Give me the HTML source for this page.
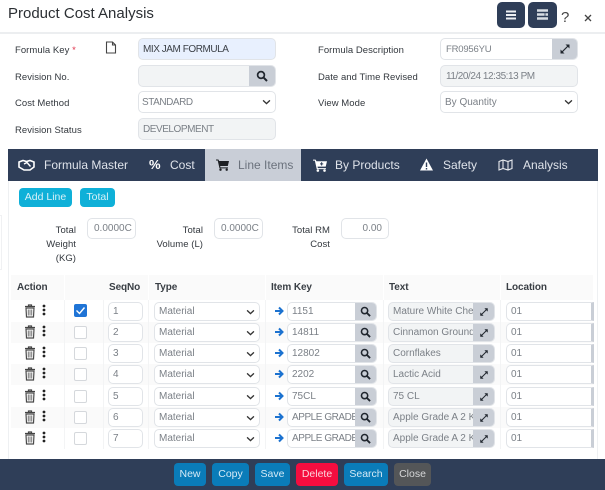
<!DOCTYPE html>
<html><head><meta charset="utf-8">
<style>
*{box-sizing:border-box}
html,body{margin:0;padding:0;background:#fff}
body{width:605px;height:490px;position:relative;overflow:hidden;font-family:"Liberation Sans",sans-serif;color:#333}
.a{position:absolute;white-space:nowrap}
.l{position:absolute;margin-top:1px;font-size:9.5px;letter-spacing:.05px;color:#33383e;line-height:12px;white-space:nowrap}
.f{position:absolute;border:1px solid #e1e4e8;border-radius:5px;background:#fff;font-size:10px;color:#7b8087;padding-left:4px;padding-top:1px;white-space:nowrap;overflow:hidden}
.u{letter-spacing:-.45px}
.g{background:#f2f4f5}
.b{position:absolute;right:0;top:0;bottom:0;background:#c9ced6;display:flex;align-items:center;justify-content:center}
.tab{position:absolute;top:149px;height:32px;line-height:32px;font-size:12px;color:#dfe3ea}
.btn{position:absolute;top:463px;height:23px;line-height:23px;text-align:center;font-size:10.5px;color:#d5eaf6;border-radius:4px;background:#0a7cb9}
.th{position:absolute;top:275px;height:25px;line-height:25px;font-size:10px;font-weight:bold;letter-spacing:-.1px;color:#3a3f45;background:#fafafa;padding-left:6px}
.cb{position:absolute;left:74px;width:13px;height:13px;border:1px solid #d5d8dc;border-radius:2px;background:#fff}
.loc{border-right:3px solid #c9ced6;border-radius:5px 0 0 5px}
.v{position:absolute;top:300px;width:1px;height:149px;background:#f3f4f5}
svg{display:block}
.ic{position:absolute}
</style></head><body>
<svg width="0" height="0" style="position:absolute"><defs>
<symbol id="s" viewBox="0 0 12 12"><circle cx="5" cy="5" r="3.4" fill="none" stroke="#20262e" stroke-width="1.7"/><path d="M7.6 7.6L11 11" stroke="#20262e" stroke-width="2"/></symbol>
<symbol id="e" viewBox="0 0 12 12"><path d="M3 9L9 3" stroke="#20262e" stroke-width="1.2"/><path d="M6.5 1.5H10.5V5.5ZM1.5 6.5V10.5H5.5Z" fill="#20262e"/></symbol>
<symbol id="c" viewBox="0 0 10 6"><path d="M1.2 1.2L5 4.8L8.8 1.2" fill="none" stroke="#333" stroke-width="1.5"/></symbol>
<symbol id="t" viewBox="0 0 12 14"><path d="M4.5 2V1H7.5V2M1 2.5H11" fill="none" stroke="#444" stroke-width="1.2"/><path d="M2 4H10L9.5 13H2.5Z" fill="none" stroke="#4a4a4a" stroke-width="1.2"/><path d="M4.3 5.5V11.5M6 5.5V11.5M7.7 5.5V11.5" stroke="#777"/></symbol>
<symbol id="k" viewBox="0 0 4 12"><circle cx="2" cy="2" r="1.4" fill="#222"/><circle cx="2" cy="6" r="1.4" fill="#222"/><circle cx="2" cy="10" r="1.4" fill="#222"/></symbol>
<symbol id="r" viewBox="0 0 10 10"><path d="M1 5H8M5 1.5L8.5 5L5 8.5" fill="none" stroke="#1b72d0" stroke-width="2"/></symbol>
</defs></svg>

<!-- header -->
<div class="a" style="left:0;top:32px;width:605px;height:2px;background:#eceef0"></div>
<div class="a" style="left:8px;top:4px;font-size:15px;line-height:20px;color:#2b2f33">Product Cost Analysis</div>
<div class="a" style="left:497px;top:2px;width:28px;height:26px;background:#2f3e58;border-radius:5px"></div>
<svg class="ic" style="left:505px;top:10px" width="12" height="10"><path d="M1 1.5H11M1 5H11M1 8.5H11" stroke="#eef0f3" stroke-width="2"/></svg>
<div class="a" style="left:528px;top:2px;width:29px;height:26px;background:#2f3e58;border-radius:5px"></div>
<svg class="ic" style="left:536px;top:9px" width="13" height="11"><path d="M1 1.5H12M1 5.5H12M1 9.5H12" stroke="#d9dde3" stroke-width="2.5"/><path d="M9 3L9 8" stroke="#2f3e58" stroke-width=".8"/></svg>
<div class="a" style="left:561px;top:9px;font-size:15px;line-height:17px;color:#444">?</div>
<svg class="ic" style="left:584px;top:14px" width="8" height="8"><path d="M1 1L7 7M7 1L1 7" stroke="#444" stroke-width="1.3"/></svg>

<!-- form -->
<div class="l" style="left:15px;top:44px">Formula Key <span style="color:#e0334c">*</span></div>
<svg class="ic" style="left:105px;top:41px" width="12" height="13"><path d="M1.5 1H7.5L10.5 4V12H1.5ZM7.5 1V4H10.5" fill="none" stroke="#444" stroke-width="1.1"/></svg>
<div class="f u" style="left:138px;top:38px;width:138px;height:22px;line-height:19px;background:#e8f0fe;color:#3c4148">MIX JAM FORMULA</div>
<div class="l" style="left:15px;top:71px">Revision No.</div>
<div class="f g" style="left:138px;top:65px;width:138px;height:22px"><div class="b" style="width:26px"><svg width="12" height="12"><use href="#s"/></svg></div></div>
<div class="l" style="left:15px;top:97px">Cost Method</div>
<div class="f u" style="left:138px;top:91px;width:138px;height:22px;line-height:19px;padding-left:3px">STANDARD<svg class="ic" style="right:4px;top:7px" width="9" height="6"><use href="#c"/></svg></div>
<div class="l" style="left:15px;top:124px">Revision Status</div>
<div class="f g u" style="left:138px;top:118px;width:138px;height:22px;line-height:19px">DEVELOPMENT</div>

<div class="l" style="left:318px;top:44px">Formula Description</div>
<div class="f" style="left:440px;top:38px;width:138px;height:22px;line-height:19px;padding-left:5px;font-size:9.5px;letter-spacing:-.2px">FR0956YU<div class="b" style="width:25px"><svg width="12" height="12"><use href="#e"/></svg></div></div>
<div class="l" style="left:318px;top:71px">Date and Time Revised</div>
<div class="f g" style="left:440px;top:65px;width:138px;height:22px;line-height:19px;letter-spacing:-.45px;padding-left:5px">11/20/24 12:35:13 PM</div>
<div class="l" style="left:318px;top:97px">View Mode</div>
<div class="f" style="left:440px;top:91px;width:138px;height:22px;line-height:19px;padding-left:4px">By Quantity<svg class="ic" style="right:4px;top:7px" width="9" height="6"><use href="#c"/></svg></div>

<!-- tabs -->
<div class="a" style="left:8px;top:149px;width:590px;height:32px;background:#2f3e58"></div>
<div class="a" style="left:205px;top:149px;width:96px;height:32px;background:#c9ced7"></div>
<svg class="ic" style="left:18px;top:159px" width="17" height="12" viewBox="0 0 17 12"><path d="M1 3L5 1.5L8.5 2.5L12 1.5L16 3V8L12 11H6L1 8Z" fill="none" stroke="#fff" stroke-width="1.6"/><path d="M6 5L9 3.5L12.5 7.5" fill="none" stroke="#fff" stroke-width="1.4"/></svg>
<div class="tab" style="left:44px">Formula Master</div>
<div class="a" style="left:149px;top:156px;font-size:13px;line-height:18px;font-weight:bold;color:#fff">%</div>
<div class="tab" style="left:170px">Cost</div>
<svg class="ic" style="left:216px;top:159px" width="13" height="12" viewBox="0 0 13 12"><path d="M0 .5H2.4L3.2 2H13L11.8 7H4.2L4.5 8.4H12V9.4H3.5L1.7 1.5H0Z" fill="#1d2024"/><circle cx="4.5" cy="10.7" r="1.2" fill="#1d2024"/><circle cx="10.7" cy="10.7" r="1.2" fill="#1d2024"/></svg>
<div class="tab" style="left:238px;color:#6b727d">Line Items</div>
<svg class="ic" style="left:313px;top:159px" width="14" height="13" viewBox="0 0 13 12"><path d="M0 .5H2.4L3.2 2H13L11.8 7H4.2L4.5 8.4H12V9.4H3.5L1.7 1.5H0Z" fill="#fff"/><path d="M8 3V6M6.5 4.5H9.5" stroke="#2f3e58"/><circle cx="4.5" cy="10.7" r="1.2" fill="#fff"/><circle cx="10.7" cy="10.7" r="1.2" fill="#fff"/></svg>
<div class="tab" style="left:335px">By Products</div>
<svg class="ic" style="left:420px;top:158px" width="13" height="13" viewBox="0 0 13 13"><path d="M6.5 .5L13 12.5H0Z" fill="#fff"/><path d="M6.5 4.5V9M6.5 10V11.5" stroke="#2f3e58" stroke-width="1.4"/></svg>
<div class="tab" style="left:443px">Safety</div>
<svg class="ic" style="left:498px;top:159px" width="15" height="12" viewBox="0 0 15 12"><path d="M1 2.5L5 1L10 2.5L14 1V9.5L10 11L5 9.5L1 11ZM5 1V9.5M10 2.5V11" fill="none" stroke="#e8ebef" stroke-width="1.1"/></svg>
<div class="tab" style="left:523px">Analysis</div>

<!-- body frame -->
<div class="a" style="left:8px;top:181px;width:1px;height:278px;background:#eef0f2"></div>
<div class="a" style="left:597px;top:181px;width:1px;height:278px;background:#eef0f2"></div>
<div class="a" style="left:-1px;top:215px;width:3px;height:55px;border:1px solid #f0f1f3"></div>

<div class="a" style="left:19px;top:188px;width:53px;height:19px;line-height:19px;background:#0fb0d8;border-radius:4px;color:#d8f1f8;font-size:10.5px;text-align:center">Add Line</div>
<div class="a" style="left:80px;top:188px;width:35px;height:19px;line-height:19px;background:#0fb0d8;border-radius:4px;color:#d8f1f8;font-size:10.5px;text-align:center">Total</div>

<div class="l" style="left:16px;top:223px;width:60px;text-align:right;line-height:14px;white-space:normal">Total<br>Weight<br>(KG)</div>
<div class="f" style="left:87px;top:218px;width:49px;height:21px;line-height:18px;padding-left:6px">0.0000C</div>
<div class="l" style="left:143px;top:223px;width:60px;text-align:right;line-height:14px;white-space:normal">Total<br>Volume (L)</div>
<div class="f" style="left:214px;top:218px;width:49px;height:21px;line-height:18px;padding-left:6px">0.0000C</div>
<div class="l" style="left:270px;top:223px;width:60px;text-align:right;line-height:14px;white-space:normal">Total RM<br>Cost</div>
<div class="f" style="left:341px;top:218px;width:48px;height:21px;line-height:18px;padding:1px 6px 0;text-align:right">0.00</div>

<!-- table head -->
<div class="th" style="left:11px;width:53px">Action</div>
<div class="th" style="left:65px;width:38px"></div>
<div class="th" style="left:103px;width:45px">SeqNo</div>
<div class="th" style="left:149px;width:116px">Type</div>
<div class="th" style="left:266px;width:117px;padding-left:5px">Item Key</div>
<div class="th" style="left:384px;width:116px;padding-left:5px">Text</div>
<div class="th" style="left:501px;width:92px;padding-left:5px">Location</div>

<!-- stripes -->
<div class="a" style="left:11px;top:322px;width:583px;height:21px;background:#fafafa"></div>
<div class="a" style="left:11px;top:364px;width:583px;height:21px;background:#fafafa"></div>
<div class="a" style="left:11px;top:407px;width:583px;height:21px;background:#fafafa"></div>
<div class="v" style="left:64px"></div>
<div class="v" style="left:103px"></div>
<div class="v" style="left:148px"></div>
<div class="v" style="left:265px"></div>
<div class="v" style="left:383px"></div>
<div class="v" style="left:500px"></div>

<!-- row 1 -->
<svg class="ic" style="left:24px;top:304px" width="12" height="14"><use href="#t"/></svg>
<svg class="ic" style="left:42px;top:304px" width="4" height="12"><use href="#k"/></svg>
<div class="a" style="left:74px;top:304px;width:13px;height:13px;background:#1f74d6;border-radius:2px"><svg width="13" height="13"><path d="M2.5 6.5L5.5 9.5L10.5 3.5" fill="none" stroke="#fff" stroke-width="1.4"/></svg></div>
<div class="f" style="left:108px;top:302px;width:35px;height:19px;line-height:16px">1</div>
<div class="f" style="left:154px;top:302px;width:106px;height:19px;line-height:16px">Material<svg class="ic" style="right:4px;top:6px" width="9" height="6"><use href="#c"/></svg></div>
<svg class="ic" style="left:274px;top:306px" width="10" height="10"><use href="#r"/></svg>
<div class="f" style="left:287px;top:302px;width:90px;height:19px;line-height:16px">1151<div class="b" style="width:21px"><svg width="11" height="11"><use href="#s"/></svg></div></div>
<div class="f g" style="left:388px;top:302px;width:107px;height:19px;line-height:16px">Mature White Che<div class="b" style="width:21px"><svg width="10" height="10"><use href="#e"/></svg></div></div>
<div class="f loc" style="left:506px;top:302px;width:88px;height:19px;line-height:16px">01</div>

<!-- row 2 -->
<svg class="ic" style="left:24px;top:325px" width="12" height="14"><use href="#t"/></svg>
<svg class="ic" style="left:42px;top:325px" width="4" height="12"><use href="#k"/></svg>
<div class="cb" style="top:326px"></div>
<div class="f" style="left:108px;top:323px;width:35px;height:19px;line-height:16px">2</div>
<div class="f" style="left:154px;top:323px;width:106px;height:19px;line-height:16px">Material<svg class="ic" style="right:4px;top:6px" width="9" height="6"><use href="#c"/></svg></div>
<svg class="ic" style="left:274px;top:327px" width="10" height="10"><use href="#r"/></svg>
<div class="f" style="left:287px;top:323px;width:90px;height:19px;line-height:16px">14811<div class="b" style="width:21px"><svg width="11" height="11"><use href="#s"/></svg></div></div>
<div class="f g" style="left:388px;top:323px;width:107px;height:19px;line-height:16px">Cinnamon Ground<div class="b" style="width:21px"><svg width="10" height="10"><use href="#e"/></svg></div></div>
<div class="f loc" style="left:506px;top:323px;width:88px;height:19px;line-height:16px">01</div>

<!-- row 3 -->
<svg class="ic" style="left:24px;top:346px" width="12" height="14"><use href="#t"/></svg>
<svg class="ic" style="left:42px;top:346px" width="4" height="12"><use href="#k"/></svg>
<div class="cb" style="top:347px"></div>
<div class="f" style="left:108px;top:344px;width:35px;height:19px;line-height:16px">3</div>
<div class="f" style="left:154px;top:344px;width:106px;height:19px;line-height:16px">Material<svg class="ic" style="right:4px;top:6px" width="9" height="6"><use href="#c"/></svg></div>
<svg class="ic" style="left:274px;top:348px" width="10" height="10"><use href="#r"/></svg>
<div class="f" style="left:287px;top:344px;width:90px;height:19px;line-height:16px">12802<div class="b" style="width:21px"><svg width="11" height="11"><use href="#s"/></svg></div></div>
<div class="f g" style="left:388px;top:344px;width:107px;height:19px;line-height:16px">Cornflakes<div class="b" style="width:21px"><svg width="10" height="10"><use href="#e"/></svg></div></div>
<div class="f loc" style="left:506px;top:344px;width:88px;height:19px;line-height:16px">01</div>

<!-- row 4 -->
<svg class="ic" style="left:24px;top:367px" width="12" height="14"><use href="#t"/></svg>
<svg class="ic" style="left:42px;top:367px" width="4" height="12"><use href="#k"/></svg>
<div class="cb" style="top:368px"></div>
<div class="f" style="left:108px;top:365px;width:35px;height:19px;line-height:16px">4</div>
<div class="f" style="left:154px;top:365px;width:106px;height:19px;line-height:16px">Material<svg class="ic" style="right:4px;top:6px" width="9" height="6"><use href="#c"/></svg></div>
<svg class="ic" style="left:274px;top:369px" width="10" height="10"><use href="#r"/></svg>
<div class="f" style="left:287px;top:365px;width:90px;height:19px;line-height:16px">2202<div class="b" style="width:21px"><svg width="11" height="11"><use href="#s"/></svg></div></div>
<div class="f g" style="left:388px;top:365px;width:107px;height:19px;line-height:16px">Lactic Acid<div class="b" style="width:21px"><svg width="10" height="10"><use href="#e"/></svg></div></div>
<div class="f loc" style="left:506px;top:365px;width:88px;height:19px;line-height:16px">01</div>

<!-- row 5 -->
<svg class="ic" style="left:24px;top:389px" width="12" height="14"><use href="#t"/></svg>
<svg class="ic" style="left:42px;top:389px" width="4" height="12"><use href="#k"/></svg>
<div class="cb" style="top:390px"></div>
<div class="f" style="left:108px;top:387px;width:35px;height:19px;line-height:16px">5</div>
<div class="f" style="left:154px;top:387px;width:106px;height:19px;line-height:16px">Material<svg class="ic" style="right:4px;top:6px" width="9" height="6"><use href="#c"/></svg></div>
<svg class="ic" style="left:274px;top:391px" width="10" height="10"><use href="#r"/></svg>
<div class="f" style="left:287px;top:387px;width:90px;height:19px;line-height:16px">75CL<div class="b" style="width:21px"><svg width="11" height="11"><use href="#s"/></svg></div></div>
<div class="f g" style="left:388px;top:387px;width:107px;height:19px;line-height:16px">75 CL<div class="b" style="width:21px"><svg width="10" height="10"><use href="#e"/></svg></div></div>
<div class="f loc" style="left:506px;top:387px;width:88px;height:19px;line-height:16px">01</div>

<!-- row 6 -->
<svg class="ic" style="left:24px;top:410px" width="12" height="14"><use href="#t"/></svg>
<svg class="ic" style="left:42px;top:410px" width="4" height="12"><use href="#k"/></svg>
<div class="cb" style="top:411px"></div>
<div class="f" style="left:108px;top:408px;width:35px;height:19px;line-height:16px">6</div>
<div class="f" style="left:154px;top:408px;width:106px;height:19px;line-height:16px">Material<svg class="ic" style="right:4px;top:6px" width="9" height="6"><use href="#c"/></svg></div>
<svg class="ic" style="left:274px;top:412px" width="10" height="10"><use href="#r"/></svg>
<div class="f u" style="left:287px;top:408px;width:90px;height:19px;line-height:16px">APPLE GRADE A<div class="b" style="width:21px"><svg width="11" height="11"><use href="#s"/></svg></div></div>
<div class="f g" style="left:388px;top:408px;width:107px;height:19px;line-height:16px">Apple Grade A 2 K<div class="b" style="width:21px"><svg width="10" height="10"><use href="#e"/></svg></div></div>
<div class="f loc" style="left:506px;top:408px;width:88px;height:19px;line-height:16px">01</div>

<!-- row 7 -->
<svg class="ic" style="left:24px;top:431px" width="12" height="14"><use href="#t"/></svg>
<svg class="ic" style="left:42px;top:431px" width="4" height="12"><use href="#k"/></svg>
<div class="cb" style="top:432px"></div>
<div class="f" style="left:108px;top:429px;width:35px;height:19px;line-height:16px">7</div>
<div class="f" style="left:154px;top:429px;width:106px;height:19px;line-height:16px">Material<svg class="ic" style="right:4px;top:6px" width="9" height="6"><use href="#c"/></svg></div>
<svg class="ic" style="left:274px;top:433px" width="10" height="10"><use href="#r"/></svg>
<div class="f u" style="left:287px;top:429px;width:90px;height:19px;line-height:16px">APPLE GRADE A<div class="b" style="width:21px"><svg width="11" height="11"><use href="#s"/></svg></div></div>
<div class="f g" style="left:388px;top:429px;width:107px;height:19px;line-height:16px">Apple Grade A 2 K<div class="b" style="width:21px"><svg width="10" height="10"><use href="#e"/></svg></div></div>
<div class="f loc" style="left:506px;top:429px;width:88px;height:19px;line-height:16px">01</div>

<!-- footer -->
<div class="a" style="left:0;top:459px;width:605px;height:31px;background:#2f3e58"></div>
<div class="btn" style="left:174px;width:32px">New</div>
<div class="btn" style="left:212px;width:37px">Copy</div>
<div class="btn" style="left:255px;width:35px">Save</div>
<div class="btn" style="left:296px;width:42px;background:#f50d3f;color:#fbd5dd">Delete</div>
<div class="btn" style="left:344px;width:44px">Search</div>
<div class="btn" style="left:394px;width:37px;background:#545658;color:#d6d7d8">Close</div>
</body></html>
